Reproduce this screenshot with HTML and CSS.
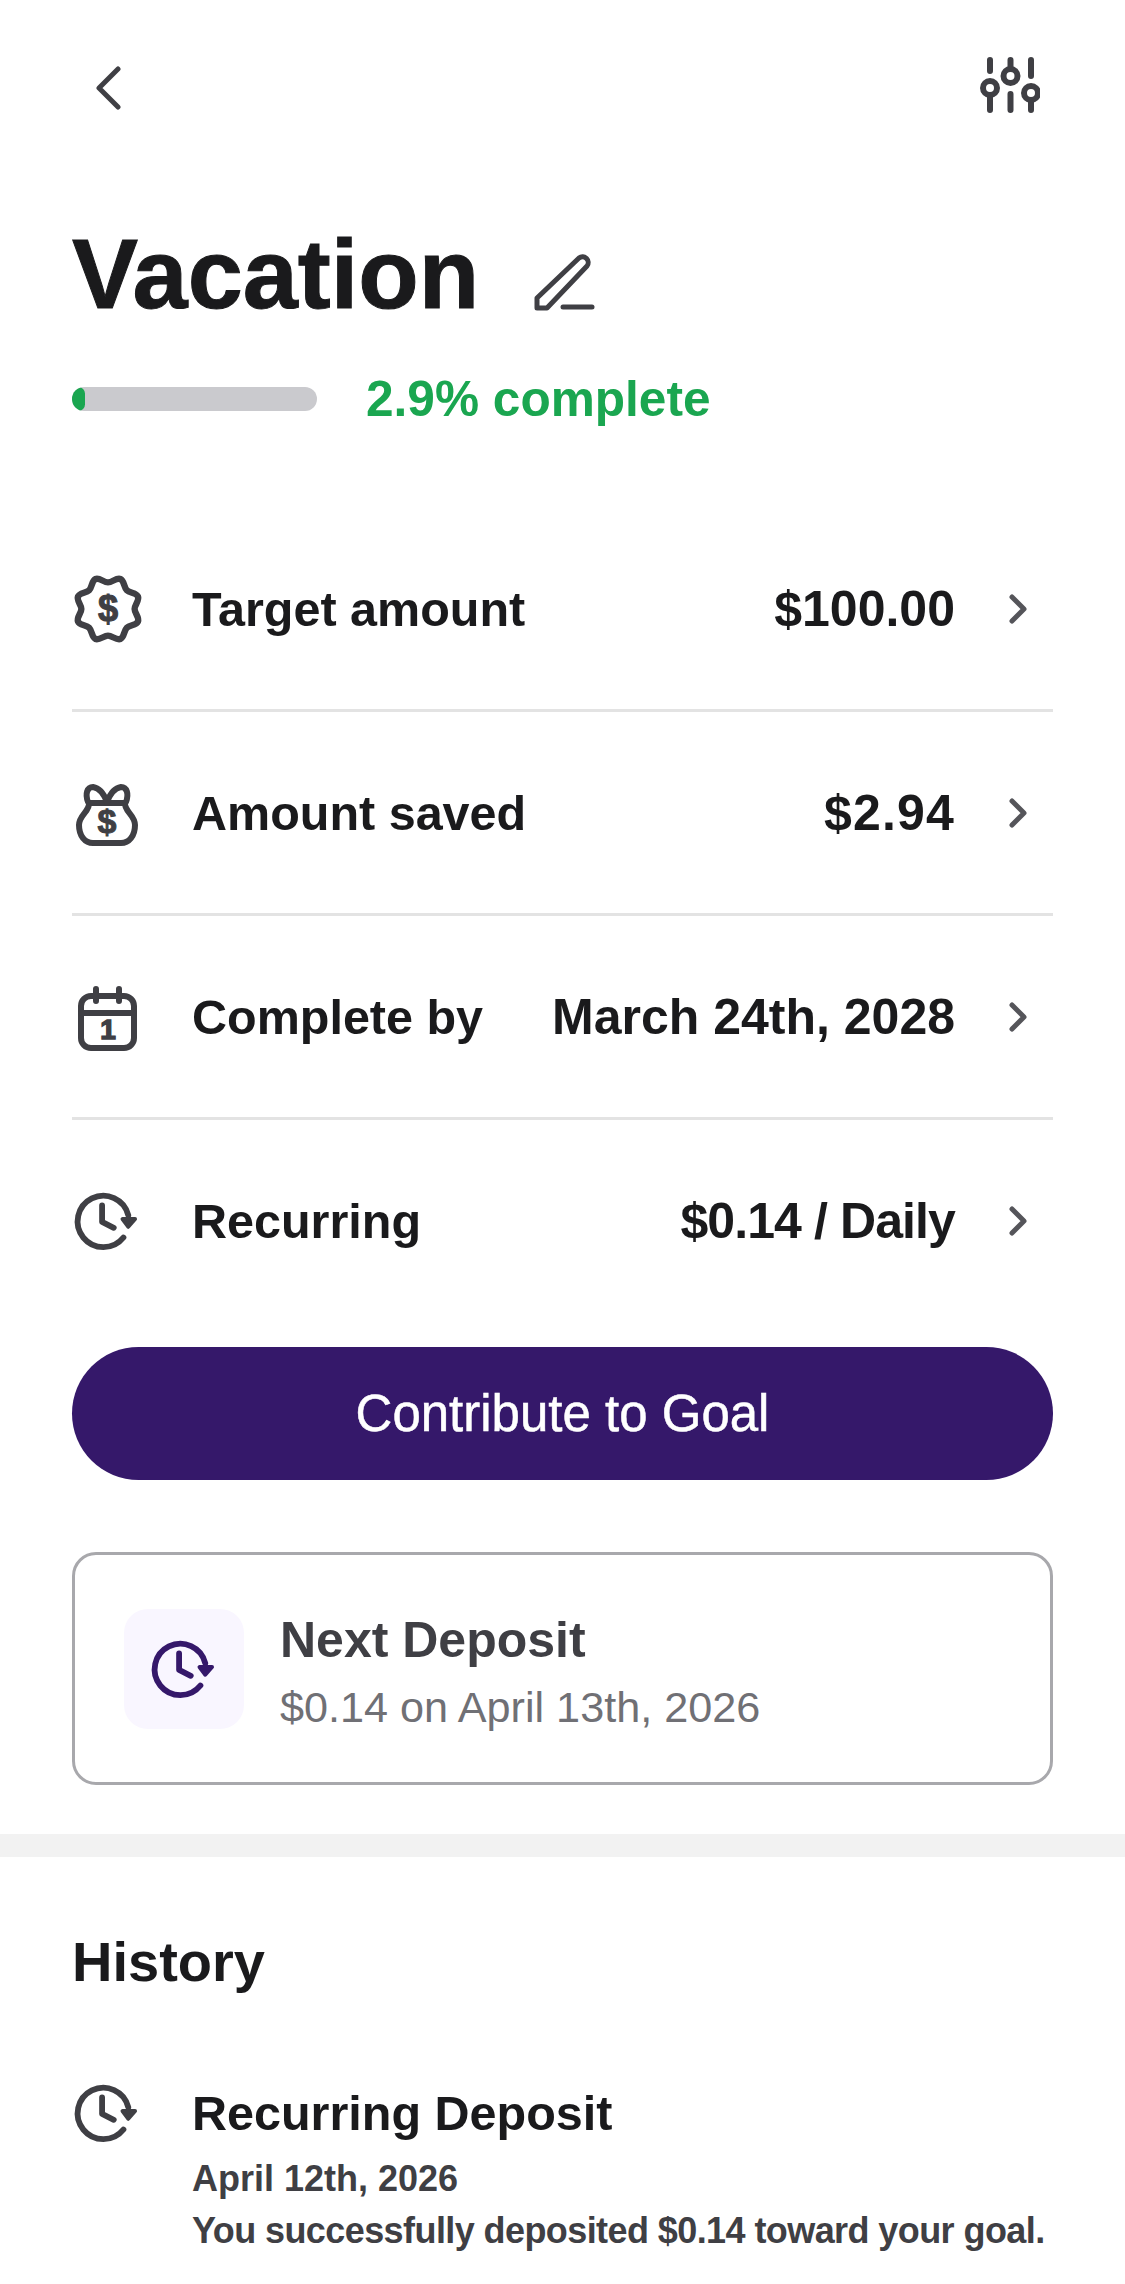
FILE: index.html
```html
<!DOCTYPE html>
<html lang="en">
<head>
    <meta charset="UTF-8">
    <meta name="viewport" content="width=device-width, initial-scale=1.0">
    <title>Vacation</title>
    <link rel="stylesheet" href="styles.css">
</head>
<body>
    <svg class="defs" width="0" height="0">
        <symbol id="clock" viewBox="0 0 68 66">
            <path d="M58 27A26.5 26.500 0 1 0 53 50" fill="none" stroke="currentColor" stroke-width="6" stroke-linecap="round"/>
            <path d="M31 17V34L43 40" fill="none" stroke="currentColor" stroke-width="6" stroke-linecap="round" stroke-linejoin="round"/>
            <path d="M52 31H65L58 39Z" fill="currentColor" stroke="currentColor" stroke-width="4" stroke-linejoin="round"/>
        </symbol>
        <symbol id="chev" viewBox="0 0 24 32">
            <path d="M6 4L18 16L6 28" fill="none" stroke="currentColor" stroke-width="5" stroke-linecap="round" stroke-linejoin="round"/>
        </symbol>
    </svg>

    <div class="top">
        <div class="topbar">
            <svg class="back" viewBox="0 0 28 44"><path d="M24 3L5 22L24 41" fill="none" stroke="#3f3f44" stroke-width="5" stroke-linecap="round" stroke-linejoin="round"/></svg>
            <svg class="filter" viewBox="0 0 60 60">
                <g fill="none" stroke="#3f3f44" stroke-width="6" stroke-linecap="round">
                    <path d="M10 5V16M30.500 5V13M51 5V21M10 41V55M30.500 39V55M51 46V55"/>
                    <circle cx="10" cy="33" r="7"/>
                    <circle cx="30.500" cy="21" r="7"/>
                    <circle cx="51" cy="38" r="7"/>
                </g>
            </svg>
        </div>

        <div class="title-row">
            <h1>Vacation</h1>
            <svg class="pencil" viewBox="0 0 62 60">
                <path d="M4 56V46L46 6A5.700 5.700 0 0 1 54 14L14 56Z" fill="none" stroke="#3f3f44" stroke-width="5" stroke-linejoin="round"/>
                <path d="M30 55H59" fill="none" stroke="#3f3f44" stroke-width="5" stroke-linecap="round"/>
            </svg>
        </div>

        <div class="progress-row">
            <div class="bar"><div class="bar-fill" style="width: 5.3%"></div></div>
            <span class="pct">2.9% complete</span>
        </div>

        <div class="rows">
            <div class="row">
                <svg class="row-icon" viewBox="-0.8 2 62 62">
                    <path d="M58 33C58 37 62.710 40.970 61.180 44.670S53.510 47.850 50.680 50.680S48.370 59.650 44.670 61.180S37 58 33 58S25.030 62.710 21.330 61.180S18.150 53.510 15.320 50.680S6.350 48.370 4.820 44.670S8 37 8 33S3.290 25.030 4.820 21.330S12.490 18.150 15.320 15.320S17.630 6.350 21.330 4.820S29 8 33 8S40.970 3.290 44.670 4.820S47.850 12.490 50.680 15.320S59.650 17.630 61.180 21.330S58 29 58 33Z" fill="none" stroke="currentColor" stroke-width="6" stroke-linejoin="round"/>
                    <text class="icon-dollar" x="33" y="44">$</text>
                </svg>
                <span class="row-label">Target amount</span>
                <span class="row-value">$100.00</span>
                <svg class="chev"><use href="#chev"/></svg>
            </div>
            <div class="row">
                <svg class="row-icon" viewBox="1 0 66 66">
                    <path d="M18 23H54C53 31 64 35 64 45C64 56 58 63 50 63H22C14 63 8 56 8 45C8 35 19 31 18 23Z" fill="none" stroke="currentColor" stroke-width="6" stroke-linejoin="round"/>
                    <path d="M36 22C33 14 28 8 22 7C16 7 14 14 17 22M36 22C39 14 44 8 50 7C56 7 58 14 55 22" fill="none" stroke="currentColor" stroke-width="6" stroke-linecap="round"/>
                    <text class="icon-dollar" x="36" y="53">$</text>
                </svg>
                <span class="row-label">Amount saved</span>
                <span class="row-value value-wide">$2.94</span>
                <svg class="chev"><use href="#chev"/></svg>
            </div>
            <div class="row">
                <svg class="row-icon" viewBox="0 0 66 66">
                    <rect x="9" y="12" width="53" height="52" rx="10" fill="none" stroke="currentColor" stroke-width="6"/>
                    <path d="M9 29H62M24 5V17M47 5V17" fill="none" stroke="currentColor" stroke-width="6" stroke-linecap="round"/>
                    <text class="icon-one" x="36" y="55">1</text>
                </svg>
                <span class="row-label">Complete by</span>
                <span class="row-value">March 24th, 2028</span>
                <svg class="chev"><use href="#chev"/></svg>
            </div>
            <div class="row row-last">
                <svg class="row-icon"><use href="#clock"/></svg>
                <span class="row-label">Recurring</span>
                <span class="row-value value-tight">$0.14 / Daily</span>
                <svg class="chev"><use href="#chev"/></svg>
            </div>
        </div>

        <button class="cta">Contribute to Goal</button>

        <div class="next-card">
            <div class="next-icon"><svg><use href="#clock"/></svg></div>
            <div class="next-text">
                <div class="next-title">Next Deposit</div>
                <div class="next-sub">$0.14 on April 13th, 2026</div>
            </div>
        </div>
    </div>

    <div class="band"></div>

    <div class="history">
        <h2>History</h2>
        <div class="hist-item">
            <svg class="row-icon"><use href="#clock"/></svg>
            <div>
                <div class="hist-title">Recurring Deposit</div>
                <div class="hist-line hist-date">April 12th, 2026</div>
                <div class="hist-line hist-msg">You successfully deposited $0.14 toward your goal.</div>
            </div>
        </div>
    </div>
</body>
</html>
```

FILE: styles.css
```css
html, body {
    margin: 0;
    background: white;
}
body {
    font-family: "Liberation Sans", Arial, sans-serif;
    color: #1a1a1c;
    height: 2284px;
    overflow: hidden;
}
.defs {
    position: absolute;
}
.top {
    padding: 0 72px;
}
.topbar {
    display: flex;
    justify-content: space-between;
    align-items: center;
    height: 176px;
    padding: 0 13px 0 22px;
}
.back {
    width: 28px;
    height: 44px;
}
.filter {
    width: 60px;
    height: 60px;
    margin-bottom: 6px;
}
.title-row {
    display: flex;
    align-items: center;
    height: 108px;
    margin-top: 44px;
}
h1 {
    margin: 0;
    font-size: 99px;
    line-height: 108px;
    font-weight: 700;
    -webkit-text-stroke: 1px #1a1a1c;
}
.pencil {
    width: 62px;
    height: 60px;
    margin-left: 54px;
    margin-top: 16px;
}
.progress-row {
    display: flex;
    align-items: center;
    margin-top: 36px;
    height: 70px;
}
.bar {
    width: 245px;
    height: 24px;
    background: #cacace;
    border-radius: 12px;
    overflow: hidden;
}
.bar-fill {
    height: 100%;
    background: #1aa650;
    border-radius: 12px;
}
.pct {
    margin-left: 49px;
    font-size: 49.6px;
    font-weight: 700;
    color: #1aa650;
}
.rows {
    margin-top: 74px;
}
.row {
    display: flex;
    align-items: center;
    height: 201px;
    border-bottom: 3px solid #e3e3e3;
}
.row-last {
    border-bottom: 0;
}
.row-icon {
    width: 66px;
    height: 66px;
    flex: none;
    color: #3f3f44;
    overflow: visible;
}
.row-label {
    margin-left: 54px;
    font-size: 48.5px;
    font-weight: 700;
}
.row-value {
    margin-left: auto;
    font-size: 50px;
    font-weight: 700;
}
.value-wide {
    letter-spacing: 1.2px;
}
.value-tight {
    letter-spacing: -0.9px;
}
.chev {
    width: 24px;
    height: 32px;
    margin-left: 51px;
    margin-right: 23px;
    color: #55555a;
}
.icon-dollar {
    font-size: 34px;
    font-weight: 700;
    text-anchor: middle;
    fill: currentColor;
    stroke: currentColor;
    stroke-width: 1px;
}
.icon-one {
    font-size: 28px;
    font-weight: 700;
    text-anchor: middle;
    fill: currentColor;
    stroke: currentColor;
    stroke-width: 1.5px;
}
.cta {
    display: block;
    width: 100%;
    height: 133px;
    margin-top: 26px;
    border: 0;
    border-radius: 67px;
    background: #35186a;
    color: white;
    font-family: inherit;
    font-size: 51px;
    -webkit-text-stroke: 0.5px white;
}
.next-card {
    display: flex;
    align-items: center;
    height: 233px;
    margin-top: 72px;
    padding-left: 49px;
    border: 3px solid #a8a8ac;
    border-radius: 24px;
    box-sizing: border-box;
}
.next-icon {
    display: flex;
    align-items: center;
    justify-content: center;
    width: 120px;
    height: 120px;
    margin-right: 36px;
    background: #f9f6ff;
    border-radius: 24px;
}
.next-icon svg {
    width: 66px;
    height: 64px;
    margin-right: 5px;
    color: #35186a;
}
.next-text {
    margin-top: 6px;
}
.next-title {
    font-size: 50px;
    line-height: 56px;
    font-weight: 700;
    color: #3f3f44;
}
.next-sub {
    margin-top: 14px;
    font-size: 43.2px;
    line-height: 50px;
    color: #707075;
}
.band {
    height: 23px;
    margin-top: 49px;
    background: #f2f2f2;
}
.history {
    padding: 0 72px;
}
h2 {
    margin: 75px 0 0;
    font-size: 56px;
    line-height: 60px;
    font-weight: 700;
}
.hist-item {
    display: flex;
    margin-top: 91px;
}
.hist-item .row-icon {
    margin-top: -3px;
    margin-right: 54px;
}
.hist-title {
    font-size: 48.5px;
    line-height: 60px;
    font-weight: 700;
}
.hist-line {
    font-size: 36px;
    line-height: 52px;
    font-weight: 700;
    color: #3f3f44;
}
.hist-date {
    margin-top: 10px;
}
.hist-msg {
    white-space: nowrap;
    letter-spacing: -0.58px;
}
```
